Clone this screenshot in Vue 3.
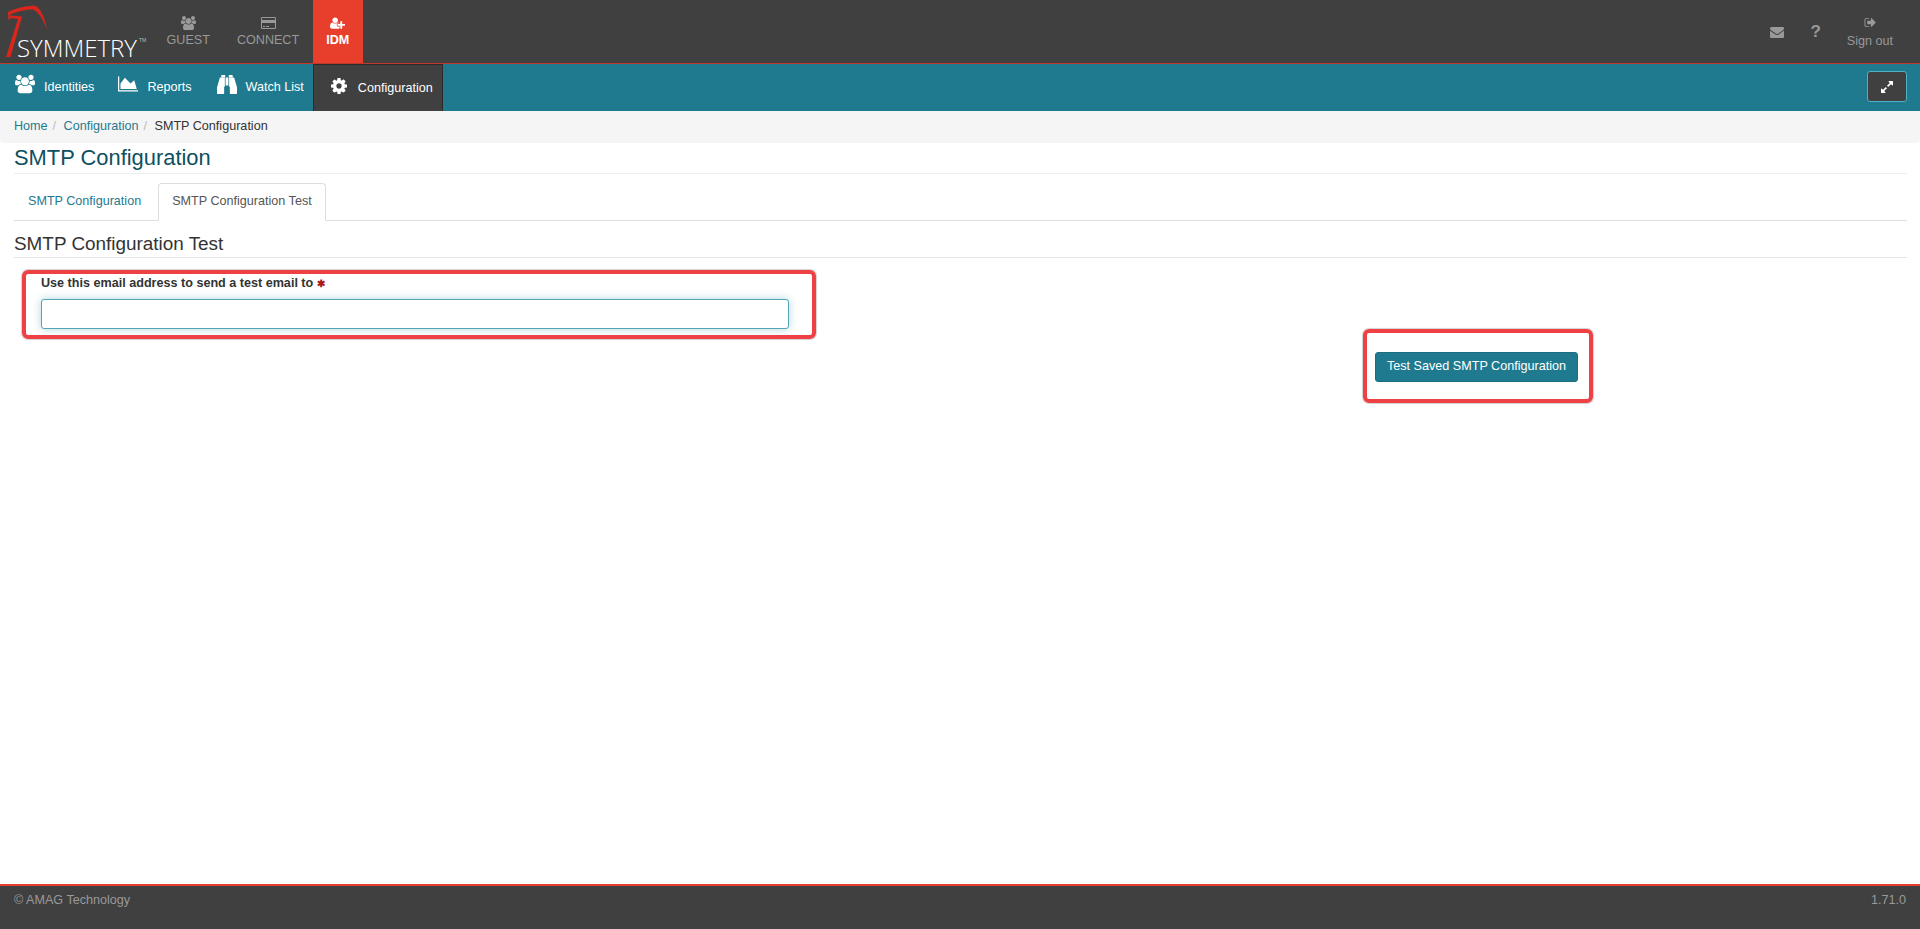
<script setup>
const icons = {
  users: { box: '0 0 1920 1792', d: 'M593 896q-162 5-265 128h-134q-82 0-138-40.500t-56-118.500q0-353 124-353 6 0 43.500 21t97.500 42.500 119 21.500q67 0 133-23-5 37-5 66 0 139 81 256zm1071 637q0 120-73 189.500t-194 69.500h-874q-121 0-194-69.500t-73-189.500q0-53 3.500-103.500t14-109 26.500-108.500 43-97.500 62-81 85.500-53.500 111.500-20q10 0 43 21.500t73 48 107 48 135 21.500 135-21.500 107-48 73-48 43-21.500q61 0 111.500 20t85.500 53.500 62 81 43 97.500 26.500 108.500 14 109 3.500 103.500zm-1024-1277q0 106-75 181t-181 75-181-75-75-181 75-181 181-75 181 75 75 181zm704 384q0 159-112.500 271.500t-271.500 112.500-271.500-112.500-112.500-271.500 112.500-271.500 271.500-112.500 271.500 112.500 112.500 271.500zm576 225q0 78-56 118.500t-138 40.500h-134q-103-123-265-128 81-117 81-256 0-29-5-66 66 23 133 23 59 0 119-21.500t97.500-42.500 43.500-21q124 0 124 353zm-128-609q0 106-75 181t-181 75-181-75-75-181 75-181 181-75 181 75 75 181z' },
  card: { box: '0 0 1920 1792', d: 'M1760 128q66 0 113 47t47 113v1216q0 66-47 113t-113 47h-1600q-66 0-113-47t-47-113v-1216q0-66 47-113t113-47h1600zm-1600 128q-13 0-22.500 9.500t-9.500 22.500v224h1664v-224q0-13-9.500-22.500t-22.500-9.500h-1600zm1600 1280q13 0 22.500-9.500t9.500-22.500v-608h-1664v608q0 13 9.500 22.500t22.500 9.500h1600zm-1504-128v-128h256v128h-256zm384 0v-128h384v128h-384z' },
  userPlus: { box: '0 0 2048 1792', d: 'M704 896q-159 0-271.500-112.500t-112.500-271.500 112.500-271.500 271.500-112.500 271.500 112.500 112.500 271.500-112.500 271.500-271.500 112.500zm960 128h352q13 0 22.500 9.500t9.500 22.500v192q0 13-9.500 22.500t-22.500 9.500h-352v352q0 13-9.500 22.500t-22.500 9.500h-192q-13 0-22.500-9.500t-9.500-22.500v-352h-352q-13 0-22.500-9.500t-9.500-22.500v-192q0-13 9.500-22.500t22.500-9.500h352v-352q0-13 9.500-22.500t22.500-9.500h192q13 0 22.500 9.500t9.500 22.500v352zm-736 224q0 52 38 90t90 38h256v238q-68 50-171 50h-874q-121 0-194-69.500t-73-189.500q0-53 3.500-103.500t14-109 26.500-108.500 43-97.500 62-81 85.500-53.500 111.500-20q19 0 39 17 79 61 154.500 91.500t164.500 30.500 164.500-30.500 154.500-91.500q20-17 39-17 132 0 217 96h-223q-52 0-90 38t-38 90v192z' },
  area: { box: '0 0 2048 1792', d: 'M2048 1536v128h-2048v-1536h128v1408h1920zm-384-1024l256 896h-1664v-576l448-576 576 576z' },
  binoculars: { box: '0 0 1792 1792', d: 'M704 320v768q0 26-19 45t-45 19v576q0 26-19 45t-45 19h-512q-26 0-45-19t-19-45v-512l249-873q7-23 31-23h424zm320 0v704h-256v-704h256zm768 896v512q0 26-19 45t-45 19h-512q-26 0-45-19t-19-45v-576q-26 0-45-19t-19-45v-768h424q24 0 31 23zM736 128v160h-352v-160q0-14 9-23t23-9h288q14 0 23 9t9 23zm672 0v160h-352v-160q0-14 9-23t23-9h288q14 0 23 9t9 23z' },
  cog: { box: '128 128 1536 1536', d: 'M1152 896q0-106-75-181t-181-75-181 75-75 181 75 181 181 75 181-75 75-181zm512-109v222q0 12-8 23t-20 13l-185 28q-19 54-39 91 35 50 107 138 10 12 10 25t-9 23q-27 37-99 108t-94 71q-12 0-26-9l-138-108q-44 23-91 38-16 136-29 186-7 28-36 28h-222q-14 0-24.500-8.500t-11.500-21.500l-28-184q-49-16-90-37l-141 107q-10 9-25 9-14 0-25-11-126-114-165-168-7-10-7-23 0-12 8-23 15-21 51-66.500t54-70.500q-27-50-41-99l-183-27q-13-2-21-12.500t-8-23.500v-222q0-12 8-23t19-13l186-28q14-46 39-92-40-57-107-138-10-12-10-24 0-10 9-23 26-36 98.500-107.500t94.500-71.500q13 0 26 10l138 107q44-23 91-38 16-136 29-186 7-28 36-28h222q14 0 24.500 8.500t11.500 21.500l28 184q49 16 90 37l142-107q9-9 24-9 13 0 25 10 129 119 165 170 7 8 7 22 0 12-8 23-15 21-51 66.500t-54 70.500q26 50 41 98l183 28q13 2 21 12.500t8 23.500z' },
  envelope: { box: '0 0 1792 1792', d: 'M1792 710v794q0 66-47 113t-113 47h-1472q-66 0-113-47t-47-113v-794q44 49 101 87 362 246 497 345 57 42 92.500 65.500t94.500 48 110 24.500h2q51 0 110-24.500t94.500-48 92.500-65.500q170-123 498-345 57-39 100-87zm0-294q0 79-49 151t-122 123q-376 261-468 325-10 7-42.500 30.500t-54 38-52 32.500-57.500 27-50 9h-2q-23 0-50-9t-57.500-27-52-32.500-54-38-42.500-30.500q-91-64-262-182.500t-205-142.500q-62-42-117-115.500t-55-136.500q0-78 41.500-130t118.500-52h1472q65 0 112.500 47t47.500 113z' },
  signout: { box: '0 0 1664 1792', d: 'M704 1440q0 4 1 20t.5 26.500-3 23.500-10 19.500-20.500 6.500h-320q-119 0-203.500-84.500t-84.500-203.500v-704q0-119 84.500-203.500t203.500-84.500h320q13 0 22.500 9.500t9.500 22.500q0 4 1 20t.5 26.500-3 23.500-10 19.500-20.500 6.500h-320q-66 0-113 47t-47 113v704q0 66 47 113t113 47h312l11.500 1 11.500 3 8 5.500 7 9 2 13.500zm928-544q0 26-19 45l-544 544q-19 19-45 19t-45-19-19-45v-288h-448q-26 0-45-19t-19-45v-384q0-26 19-45t45-19h448v-288q0-26 19-45t45-19 45 19l544 544q19 19 19 45z' },
  expand: { box: '0 0 1792 1792', d: 'M883 1056q0 13-10 23l-332 332 144 144q19 19 19 45t-19 45-45 19h-448q-26 0-45-19t-19-45v-448q0-26 19-45t45-19 45 19l144 144 332-332q10-10 23-10t23 10l114 114q10 10 10 23zm781-864v448q0 26-19 45t-45 19-45-19l-144-144-332 332q-10 10-23 10t-23-10l-114-114q-10-10-10-23t10-23l332-332-144-144q-19-19-19-45t19-45 45-19h448q26 0 45 19t19 45z' }
}
const apps = [
  { label: 'GUEST', icon: icons.users },
  { label: 'CONNECT', icon: icons.card },
  { label: 'IDM', icon: icons.userPlus, active: true }
]
const navItems = [
  { label: 'Identities', icon: icons.users },
  { label: 'Reports', icon: icons.area },
  { label: 'Watch List', icon: icons.binoculars }
]
</script>

<template>
  <div class="page">
    <header class="topbar">
      <div class="logo">
        <svg class="logo-mark" viewBox="0 0 50 60" aria-hidden="true">
          <path d="M8.500 20 L8 12 C14 9 28 5 36 6 C41 9 45 19 47 29 C43 20 39 12 33 9.500 C26 9 17 12 11 14 L10 15.500 L22 16.500 L10.500 57 L6 57 L18 19 L10.500 18 L9.500 20 Z" fill="#d8261c" />
        </svg>
        <span class="logo-text">SYMMETRY</span>
        <span class="logo-tm">TM</span>
      </div>
      <nav class="apps">
        <a v-for="app in apps" :key="app.label" class="app" :class="{ 'app-active': app.active }">
          <svg class="app-icon" :viewBox="app.icon.box" aria-hidden="true"><path :d="app.icon.d" /></svg>
          <span>{{ app.label }}</span>
        </a>
      </nav>
      <div class="user-tools">
        <svg class="tool-mail" :viewBox="icons.envelope.box" aria-hidden="true"><path :d="icons.envelope.d" /></svg>
        <span class="tool-help">?</span>
        <a class="signout">
          <svg class="signout-icon" :viewBox="icons.signout.box" aria-hidden="true"><path :d="icons.signout.d" /></svg>
          <span>Sign out</span>
        </a>
      </div>
    </header>

    <nav class="subnav">
      <a v-for="item in navItems" :key="item.label" class="sub-item">
        <svg class="sub-icon" :viewBox="item.icon.box" aria-hidden="true"><path :d="item.icon.d" /></svg>
        <span>{{ item.label }}</span>
      </a>
      <a class="sub-config">
        <svg class="config-icon" :viewBox="icons.cog.box" aria-hidden="true"><path :d="icons.cog.d" /></svg>
        <span>Configuration</span>
      </a>
      <button class="expand-btn" type="button" aria-label="Expand">
        <svg :viewBox="icons.expand.box" aria-hidden="true"><path :d="icons.expand.d" /></svg>
      </button>
    </nav>

    <ol class="crumbs">
      <li><a>Home</a><span class="sep">/</span></li>
      <li><a>Configuration</a><span class="sep">/</span></li>
      <li class="crumb-current">SMTP Configuration</li>
    </ol>

    <main class="content">
      <h1 class="title">SMTP Configuration</h1>
      <div class="tabs">
        <a class="tab">SMTP Configuration</a>
        <a class="tab tab-active">SMTP Configuration Test</a>
      </div>
      <h2 class="section">SMTP Configuration Test</h2>
      <form class="form" @submit.prevent>
        <div class="field">
          <label class="label" for="email">Use this email address to send a test email to <span class="req">✱</span></label>
          <input id="email" class="input" type="text" />
          <span class="mark mark-field"></span>
        </div>
        <div class="action">
          <button class="test-btn" type="submit">Test Saved SMTP Configuration</button>
          <span class="mark mark-action"></span>
        </div>
      </form>
    </main>

    <footer class="footer">
      <span>© AMAG Technology</span>
      <span>1.71.0</span>
    </footer>
  </div>
</template>

<style scoped>
.page, .page * { box-sizing: border-box; }
.page {
  min-height: 100vh;
  display: flex;
  flex-direction: column;
  font-family: "Liberation Sans", Arial, sans-serif;
  font-size: 12.600px;
  color: #333;
  background: #fff;
}
svg { fill: currentColor; display: block; }

.topbar {
  height: 64px;
  flex: none;
  display: flex;
  background: #404040;
  border-bottom: 1px solid #c0392b;
}
.logo { position: relative; width: 153px; flex: none; }
.logo-mark { position: absolute; left: 0; top: 0; width: 50px; height: 60px; }
.logo-text {
  position: absolute; left: 17px; top: 32px;
  font-family: "Open Sans", sans-serif; font-weight: 300;
  font-size: 24px; line-height: 32px; color: #fff;
}
.logo-tm { position: absolute; left: 139px; top: 38px; font-size: 5px; line-height: 5px; color: #bbb; }

.apps { display: flex; }
.app {
  display: flex; flex-direction: column; align-items: center;
  padding: 16px 13.500px 0; color: #999; line-height: 16px;
}
.app-icon { width: 15px; height: 14px; margin-bottom: 2px; }
.app-active { background: #e83e2c; color: #fff; font-weight: 700; }

.user-tools { margin-left: auto; display: flex; align-items: flex-start; color: #999; padding-right: 27px; }
.tool-mail { width: 14px; height: 14px; margin-top: 25px; }
.tool-help { margin: 22px 0 0 26px; font: 700 17px/20px "Liberation Sans", sans-serif; }
.signout { display: flex; flex-direction: column; align-items: center; margin: 16px 0 0 26px; line-height: 16px; }
.signout-icon { width: 12px; height: 13px; margin-bottom: 4px; }

.subnav {
  height: 47px; flex: none; display: flex; align-items: stretch;
  background: #1f7a8f; color: #fff;
}
.sub-item { display: flex; align-items: center; padding-left: 15px; gap: 9px; padding-bottom: 1px; }
.sub-item:nth-child(2) { padding-left: 24px; }
.sub-item:nth-child(3) { padding-left: 25px; }
.sub-icon { width: 20px; height: 20px; margin-top: -6px; }
.sub-config {
  margin-left: 9px; width: 130px;
  display: flex; align-items: center; padding-left: 17px; gap: 11px; padding-bottom: 1px;
  background: #404040; border: 1px solid #2b2b2b; border-bottom: 0;
}
.config-icon { width: 16px; height: 16px; margin-top: -4px; }
.expand-btn {
  margin: 7px 13px 0 auto; width: 40px; height: 31px; padding: 0;
  display: flex; align-items: center; justify-content: center;
  background: #404040; color: #fff; border: 1px solid #4fb1c4; border-radius: 3px;
}
.expand-btn svg { width: 14px; height: 14px; }

.crumbs {
  list-style: none; margin: 0; height: 32px; flex: none;
  padding: 0 14px 3px; display: flex; align-items: center;
  background: #f5f5f5; border-radius: 0 0 4px 4px;
}
.crumbs a { color: #1f7a8f; }
.sep { color: #bbb; padding: 0 7.500px 0 5px; }
.crumb-current { color: #333; }

.content { padding: 0 13px 0 14px; }
.title {
  margin: 0; height: 31px; font-size: 21.900px; line-height: 30px; font-weight: 400;
  color: #0d5060; border-bottom: 1px solid #eee;
}
.tabs { margin-top: 9px; height: 38px; display: flex; border-bottom: 1px solid #ddd; }
.tab {
  height: 38px; padding: 0 13px; line-height: 34px;
  color: #1f7a8f; border: 1px solid transparent; border-bottom: 0;
}
.tab-active {
  margin-left: 3px; color: #555; background: #fff; border-color: #ddd;
  border-radius: 4px 4px 0 0; border-bottom: 1px solid #fff;
}
.section {
  margin: 0; height: 37px; padding-top: 10px; font-size: 18.900px; line-height: 26px; font-weight: 400;
  color: #333; border-bottom: 1px solid #e5e5e5;
}
.form { display: flex; align-items: flex-start; }
.field { position: relative; width: 748px; margin: 17px 0 0 27px; flex: none; }
.label { display: block; height: 16px; font-weight: 700; line-height: 17px; color: #333; }
.req { color: #a81b1b; font-size: 10px; line-height: 1; }
.input {
  display: block; margin-top: 8px; width: 100%; height: 30px;
  border: 1px solid #52a5b3; border-radius: 3px; outline: 0;
  box-shadow: 0 0 8px rgba(82, 165, 179, .45);
}
.action { position: relative; margin: 94px 0 0 586px; }
.test-btn {
  display: block; width: 203px; height: 30px; padding: 0 0 3px;
  background: #1f7a8f; color: #fff; border: 1px solid #1b6d80; border-radius: 3px;
  font: 400 12.600px "Liberation Sans", sans-serif;
}
.mark {
  position: absolute; border: 4px solid #ef4044; border-radius: 6px; pointer-events: none;
  box-shadow: 0 0 1px 1px rgba(0, 0, 0, .18);
}
.mark-field { left: -19px; top: -5px; width: 794px; height: 69px; }
.mark-action { left: -12px; top: -23px; width: 230px; height: 74px; }

.footer {
  margin-top: auto; height: 45px; flex: none; padding: 0 14px;
  display: flex; justify-content: space-between; align-items: flex-start;
  background: #404040; border-top: 2px solid #e83e2c; color: #999;
  line-height: 28px;
}
</style>
